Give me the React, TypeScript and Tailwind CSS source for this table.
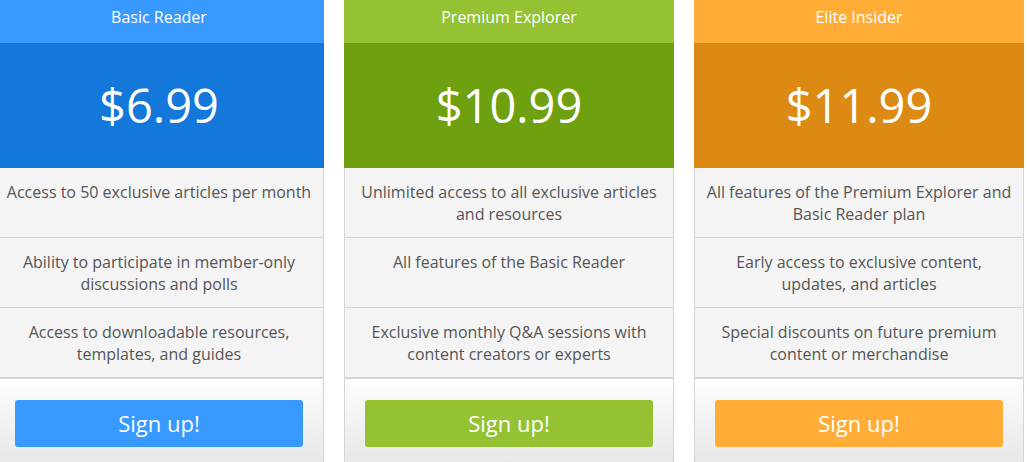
import React from 'react'

interface Plan {
  name: string
  price: string
  features: string[]
  headerClass: string
  priceClass: string
  buttonClass: string
}

const plans: Plan[] = [
  {
    name: 'Basic Reader',
    price: '$6.99',
    features: [
      'Access to 50 exclusive articles per month',
      'Ability to participate in member-only discussions and polls',
      'Access to downloadable resources, templates, and guides',
    ],
    headerClass: 'bg-[#3899ff]',
    priceClass: 'bg-[#1477da]',
    buttonClass: 'bg-[#3899ff]',
  },
  {
    name: 'Premium Explorer',
    price: '$10.99',
    features: [
      'Unlimited access to all exclusive articles and resources',
      'All features of the Basic Reader',
      'Exclusive monthly Q&A sessions with content creators or experts',
    ],
    headerClass: 'bg-[#94c232]',
    priceClass: 'bg-[#6fa00f]',
    buttonClass: 'bg-[#94c232]',
  },
  {
    name: 'Elite Insider',
    price: '$11.99',
    features: [
      'All features of the Premium Explorer and Basic Reader plan',
      'Early access to exclusive content, updates, and articles',
      'Special discounts on future premium content or merchandise',
    ],
    headerClass: 'bg-[#ffad36]',
    priceClass: 'bg-[#dd8a15]',
    buttonClass: 'bg-[#ffad36]',
  },
]

function PlanCard({ plan }: { plan: Plan }) {
  return (
    <div className="flex w-[330px] shrink-0 flex-col">
      <div className={`${plan.headerClass} h-[43px] pt-[5px] text-center text-[16px] leading-[24px] text-white`}>
        {plan.name}
      </div>
      <div
        className={`${plan.priceClass} flex h-[125px] items-center justify-center text-[47px] leading-none text-white`}
      >
        {plan.price}
      </div>
      <ul>
        {plan.features.map((feature) => (
          <li
            key={feature}
            className="h-[70px] border-x border-b border-[#d4d4d4] bg-[#f4f4f4] px-[10px] pt-[13px] text-center text-[16px] leading-[22px] text-[#555]"
          >
            {feature}
          </li>
        ))}
      </ul>
      <div className="h-[100px] border-x border-t border-[#d4d4d4] bg-gradient-to-b from-[#fdfdfd] to-[#e4e4e4] px-5 pt-[21px]">
        <button
          className={`${plan.buttonClass} h-[47px] w-full rounded-[3px] text-[22px] text-white`}
        >
          Sign up!
        </button>
      </div>
    </div>
  )
}

export default function App() {
  return (
    <div
      className="h-[462px] w-[1027px] overflow-hidden bg-white"
      style={{ fontFamily: '"Open Sans", "Noto Sans", sans-serif' }}
    >
      <div className="-ml-[6px] flex gap-5">
        {plans.map((plan) => (
          <PlanCard key={plan.name} plan={plan} />
        ))}
      </div>
    </div>
  )
}
